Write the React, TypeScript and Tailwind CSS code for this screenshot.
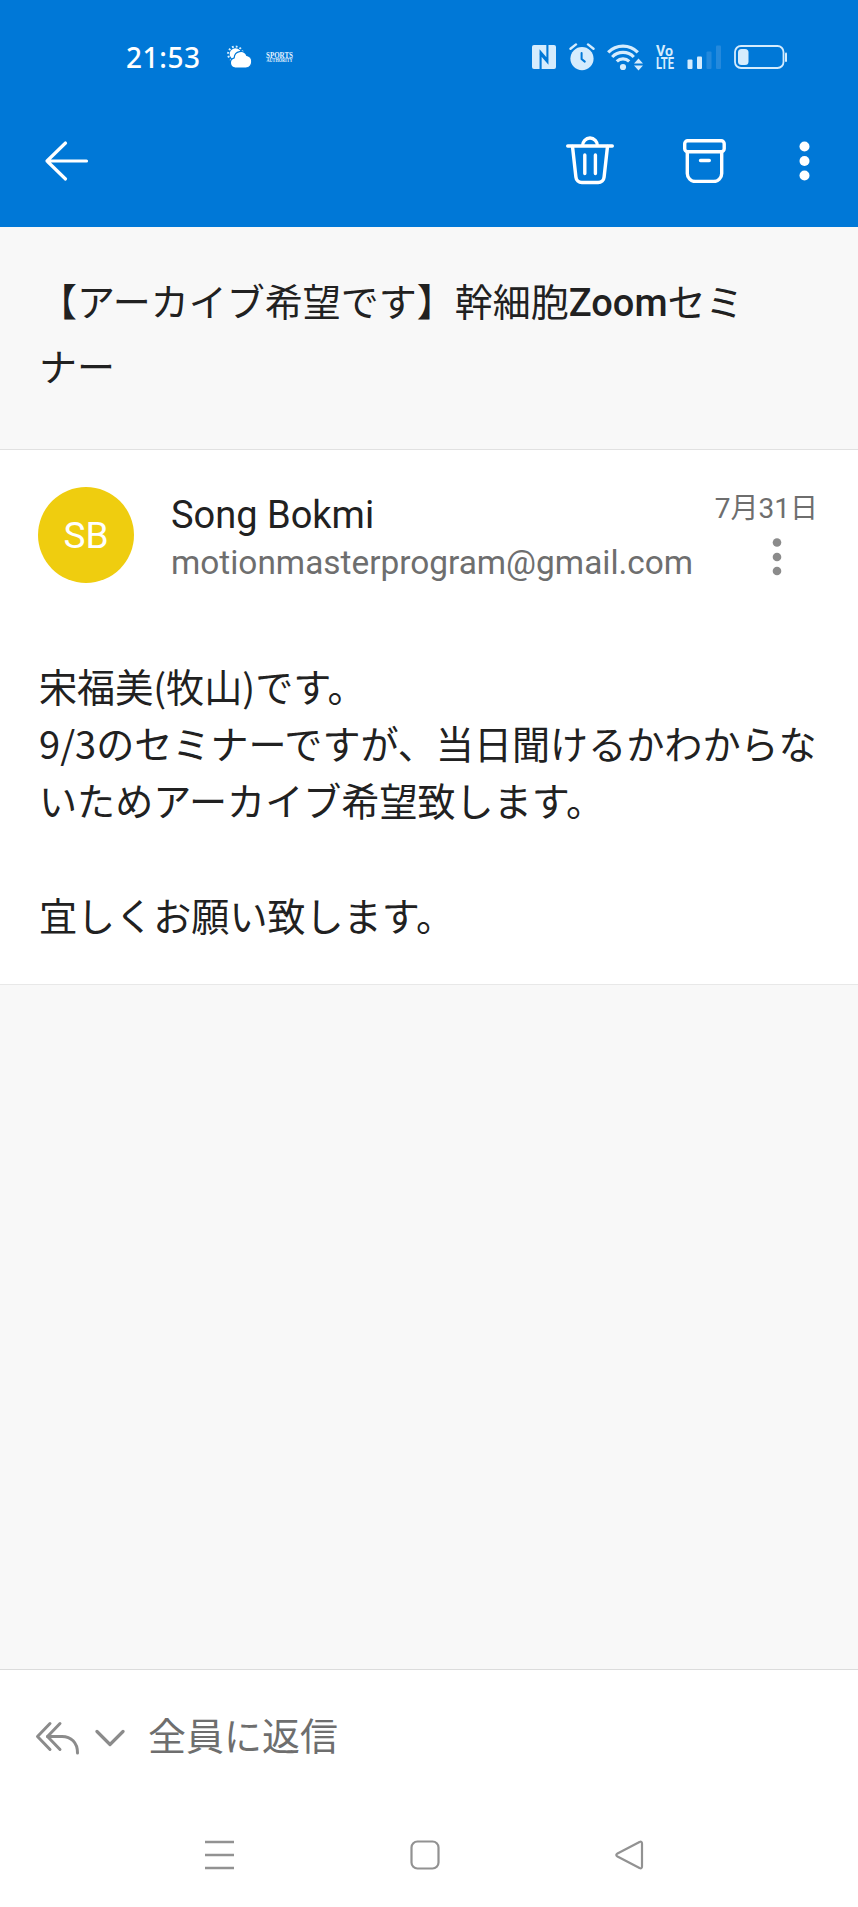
import type { ReactNode } from 'react';

const message = {
  sender: 'Song Bokmi',
  initials: 'SB',
  email: 'motionmasterprogram@gmail.com',
  date: '7月31日',
  lines: [
    '宋福美(牧山)です。',
    '9/3のセミナーですが、当日聞けるかわからないためアーカイブ希望致します。',
    '',
    '宜しくお願い致します。',
  ],
};

function IconButton({ label, className = '', children }: { label: string; className?: string; children: ReactNode }) {
  return (
    <button type="button" aria-label={label} className={`block shrink-0 ${className}`}>
      {children}
    </button>
  );
}

function WeatherIcon() {
  return (
    <svg width="26" height="24" viewBox="0 0 26 24">
      <circle cx="8.5" cy="9" r="7.4" fill="none" stroke="#d9f0ff" strokeWidth="2" strokeDasharray="1.8 2.08" />
      <circle cx="8.5" cy="9" r="5.8" fill="#fff" />
      <path
        d="M8.3 23a5.2 5.2 0 0 1-1.1-10.2 6.6 6.6 0 0 1 12.6-2.4 6.4 6.4 0 0 1-.8 12.6z"
        fill="#fff"
        stroke="#0078d7"
        strokeWidth="1.2"
      />
    </svg>
  );
}

function SportsLogo() {
  return (
    <svg className="overflow-visible" width="27" height="12" viewBox="0 0 27 12" fill="#e4f3ff" fontFamily="Liberation Serif, serif" fontWeight="700">
      <text x="0" y="6.5" fontSize="8.5" textLength="27" lengthAdjust="spacingAndGlyphs">SPORTS</text>
      <text x="0.5" y="10.8" fontSize="5.5" textLength="26" lengthAdjust="spacingAndGlyphs">AUTHORITY</text>
    </svg>
  );
}

function NfcIcon() {
  return (
    <svg width="24" height="24" viewBox="0 0 24 24">
      <rect width="24" height="24" rx="2" fill="#d5ecfd" />
      <path d="M8.6 24V7L16 15.6M15.4 0v17L8 8.4" fill="none" stroke="#0078d7" strokeWidth="2.1" />
    </svg>
  );
}

function AlarmIcon() {
  return (
    <svg width="26" height="28" viewBox="0 0 26 28">
      <circle cx="13" cy="15.6" r="11.6" fill="#d5ecfd" />
      <path d="M1.5 5.8 7 1.4M24.5 5.8 19 1.4" stroke="#d5ecfd" strokeWidth="2.4" strokeLinecap="round" />
      <path d="M12.6 10v6l3.2 2.6" fill="none" stroke="#0078d7" strokeWidth="2" strokeLinecap="round" />
    </svg>
  );
}

function WifiIcon() {
  return (
    <svg width="37" height="28" viewBox="0 0 37 28" fill="none" stroke="#d5ecfd" strokeWidth="3.2">
      <path d="M1.2 9.4a20.5 20.5 0 0 1 29.6 0" />
      <path d="M5.2 14a15 15 0 0 1 21.6 0" />
      <path d="M9.8 18.4a9 9 0 0 1 12.4 0" />
      <circle cx="16" cy="24" r="3.1" fill="#d5ecfd" stroke="none" />
      <path d="M27 20.4 31.5 15.4l4.5 5zM27 22.6h9l-4.5 5z" fill="#d5ecfd" stroke="none" />
    </svg>
  );
}

function VolteIcon() {
  return (
    <svg className="overflow-visible" width="18" height="26" viewBox="0 0 18 26" fill="#d5ecfd" fontFamily="Roboto, sans-serif" fontWeight="700">
      <text x="0" y="12" fontSize="15.5" textLength="17" lengthAdjust="spacingAndGlyphs">Vo</text>
      <text x="0" y="25" fontSize="16" textLength="18" lengthAdjust="spacingAndGlyphs">LTE</text>
    </svg>
  );
}

function SignalIcon() {
  return (
    <svg width="34" height="24" viewBox="0 0 34 24">
      <rect x="0.5" y="14.5" width="5" height="9.5" rx="1" fill="#d5ecfd" />
      <rect x="10" y="11.5" width="5" height="12.5" rx="1" fill="#d5ecfd" />
      <rect x="19.5" y="6.5" width="5" height="17.5" rx="1" fill="#2489dc" />
      <rect x="29" y="0.5" width="5" height="23.5" rx="1" fill="#2489dc" />
    </svg>
  );
}

function BatteryIcon() {
  return (
    <svg width="54" height="24" viewBox="0 0 54 24">
      <rect x="1" y="1" width="48.5" height="22" rx="6" fill="none" stroke="#d5ecfd" strokeWidth="1.8" />
      <rect x="4" y="4" width="10.5" height="16" rx="3.5" fill="#d5ecfd" />
      <path d="M52 8.5v7.5" stroke="#d5ecfd" strokeWidth="2" strokeLinecap="round" />
    </svg>
  );
}

function StatusBar() {
  return (
    <div className="flex h-[114px] items-center pr-[70px] pl-[126px]">
      <span className="w-[101px] font-['Noto_Sans',sans-serif] text-[28px] leading-none font-medium tracking-[0.6px]">21:53</span>
      <WeatherIcon />
      <div className="ml-[13px]">
        <SportsLogo />
      </div>
      <div className="ml-auto flex items-center">
        <NfcIcon />
        <div className="ml-[13px]"><AlarmIcon /></div>
        <div className="ml-[12px]"><WifiIcon /></div>
        <div className="ml-[12px]"><VolteIcon /></div>
        <div className="ml-[13px]"><SignalIcon /></div>
        <div className="ml-[13px]"><BatteryIcon /></div>
      </div>
    </div>
  );
}

function Toolbar() {
  return (
    <div className="flex h-[93px] items-center pr-[48px] pl-[44px]">
      <IconButton label="戻る">
        <svg width="45" height="42" viewBox="0 0 45 42" fill="none" stroke="#fff" strokeWidth="3.2" strokeLinecap="round" strokeLinejoin="round">
          <path d="M42.5 21H3M21.5 3 3 21l18.5 18" />
        </svg>
      </IconButton>
      <IconButton label="削除" className="ml-auto">
        <svg width="48" height="52" viewBox="0 0 48 52" fill="none" stroke="#fff" strokeWidth="3.4" strokeLinecap="round" strokeLinejoin="round">
          <path d="M1.7 11h44.6M16.5 11a7.5 8 0 0 1 15 0" />
          <path d="M6.5 11.5 9.9 42a6 6 0 0 0 6 5.5h16.2a6 6 0 0 0 6-5.5l3.4-30.5" />
          <path d="M18.8 20v18.5M29.4 20v18.5" />
        </svg>
      </IconButton>
      <IconButton label="アーカイブ" className="ml-[69px]">
        <svg width="44" height="44" viewBox="0 0 44 44" fill="none" stroke="#fff" strokeWidth="3.4" strokeLinecap="round" strokeLinejoin="round">
          <rect x="1.7" y="1.7" width="39.5" height="11" rx="3" />
          <path d="M4.3 13v21.500a8 8 0 0 0 8 8h18.400a8 8 0 0 0 8-8V13M17.500 21.500h8.800" />
        </svg>
      </IconButton>
      <IconButton label="その他" className="ml-[72px]">
        <svg width="11" height="42" viewBox="0 0 11 42" fill="#fff">
          <circle cx="5.5" cy="6.5" r="5" />
          <circle cx="5.5" cy="21" r="5" />
          <circle cx="5.5" cy="35.5" r="5" />
        </svg>
      </IconButton>
    </div>
  );
}

function MessageHeader() {
  return (
    <div className="flex pr-10 pl-[38px]">
      <div className="flex size-24 shrink-0 items-center justify-center rounded-full bg-[#efcd0f] pt-px text-[37px] text-white">
        {message.initials}
      </div>
      <div className="ml-[37px]">
        <p className="mt-1 text-[38px] leading-[48px] text-[#212121]">{message.sender}</p>
        <p className="text-[33.4px] leading-[47px] text-[#6e6e6e]">{message.email}</p>
      </div>
      <div className="ml-auto flex flex-col items-end">
        <p className="text-[28px] leading-[43px] whitespace-nowrap text-[#6e6e6e]">{message.date}</p>
        <IconButton label="メッセージの操作" className="mt-[7px] mr-9">
          <svg width="10" height="40" viewBox="0 0 10 40" fill="#8b8b8b">
            <circle cx="5" cy="5.5" r="4.3" />
            <circle cx="5" cy="20" r="4.3" />
            <circle cx="5" cy="34" r="4.3" />
          </svg>
        </IconButton>
      </div>
    </div>
  );
}

function ReplyBar() {
  return (
    <div className="flex h-[135px] items-center pl-[35px] text-[#6e6e6e]">
      <svg width="45" height="34" viewBox="0 0 45 34" fill="none" stroke="#8b8b8b" strokeWidth="3" strokeLinecap="round" strokeLinejoin="round">
        <path d="M15 2.5 2.5 15.5 15 28.5M25 2.5 12.5 15.5 25 28.5" />
        <path d="M12.5 15.5h14.5c9 0 15.500 6 15.500 16.500" />
      </svg>
      <svg className="ml-[15px]" width="30" height="18" viewBox="0 0 30 18" fill="none" stroke="#8b8b8b" strokeWidth="3.2" strokeLinecap="round" strokeLinejoin="round">
        <path d="M2 2.5 15 15.5 28 2.5" />
      </svg>
      <span className="ml-[23px] text-[38px]">全員に返信</span>
    </div>
  );
}

function NavigationBar() {
  return (
    <div className="flex h-[102px] items-center justify-between pr-[214px] pb-[3px] pl-[205px]">
      <svg width="29" height="30" viewBox="0 0 29 30" stroke="#929292" strokeWidth="2.6">
        <path d="M0 2h29M0 15h29M0 28h29" />
      </svg>
      <svg width="30" height="30" viewBox="0 0 30 30" fill="none" stroke="#929292" strokeWidth="2.2">
        <rect x="1.5" y="1.5" width="27" height="27" rx="6" />
      </svg>
      <svg width="29" height="30" viewBox="0 0 29 30" fill="none" stroke="#929292" strokeWidth="2.2" strokeLinejoin="round">
        <path d="M2.5 13.5 24.5 2q2.500-1 2.500 1.500v23q0 2.500-2.500 1.500L2.500 16.500q-2.500-1.500 0-3z" />
      </svg>
    </div>
  );
}

export default function App() {
  return (
    <div lang="ja" className="flex h-[1907px] w-full flex-col bg-[#f8f8f8] font-[Roboto,'Noto_Sans_CJK_JP',sans-serif] text-[#212121]">
      <header className="h-[227px] shrink-0 bg-[#0078d7] text-white">
        <StatusBar />
        <Toolbar />
      </header>

      <h1 className="h-[223px] shrink-0 border-b border-[#e1e1e1] px-[39px] pt-[44px] text-[38px] leading-[65.3px]">
        【アーカイブ希望です】幹細胞<span className="font-medium">Zoom</span>セミ
        <br />
        ナー
      </h1>

      <main className="h-[535px] shrink-0 border-b border-[#e8e8e8] bg-white pt-[37px]">
        <MessageHeader />
        <div className="mt-[71px] pr-8 pl-[39px] font-['Noto_Sans_CJK_JP',sans-serif] text-[38.1px] leading-[57.2px]">
          {message.lines.map((line, i) => (
            <p key={i} className="min-h-[57.2px]">{line}</p>
          ))}
        </div>
      </main>

      <footer className="mt-auto border-t border-[#dcdcdc] bg-white">
        <ReplyBar />
        <NavigationBar />
      </footer>
    </div>
  );
}
